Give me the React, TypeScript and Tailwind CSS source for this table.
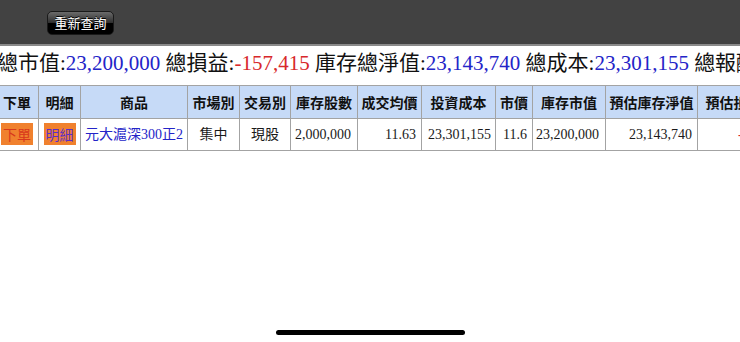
import React from 'react';

const summary = [
    { label: '總市值', value: '23,200,000', tone: 'text-[#2424c8]' },
    { label: '總損益', value: '-157,415', tone: 'text-[#d8282a]' },
    { label: '庫存總淨值', value: '23,143,740', tone: 'text-[#2424c8]' },
    { label: '總成本', value: '23,301,155', tone: 'text-[#2424c8]' },
    { label: '總報酬率', value: '-0.68%', tone: 'text-[#d8282a]' },
];

const headers = [
    { text: '下單', w: 'w-[43px]' },
    { text: '明細', w: 'w-[42px]' },
    { text: '商品', w: 'w-[107px]' },
    { text: '市場別', w: 'w-[52px]' },
    { text: '交易別', w: 'w-[51px]' },
    { text: '庫存股數', w: 'w-[67px]' },
    { text: '成交均價', w: 'w-[64px]' },
    { text: '投資成本', w: 'w-[74px]' },
    { text: '市價', w: 'w-[37px]' },
    { text: '庫存市值', w: 'w-[73px]' },
    { text: '預估庫存淨值', w: 'w-[92px]' },
    { text: '預估損益', w: 'w-[72px]' },
];

const serif = "font-['Liberation_Serif','Noto_Sans_CJK_TC',serif]";
const sans = "font-['Noto_Sans_CJK_TC','Noto_Sans',sans-serif]";

const App: React.FC = () => {
    return (
        <div className="relative h-[342px] w-[740px] overflow-hidden bg-white">
            {/* top toolbar */}
            <div className="flex h-[46px] items-start border-b-2 border-[#8a8a8a] bg-[#424242] pl-[47px] pt-[11px]">
                <button
                    className={`h-[24px] w-[67px] rounded-[5px] border border-[#1a1a1a] bg-[linear-gradient(#6a6a6a,#2e2e2e_50%,#000_52%,#000)] text-[13px] leading-[22px] text-white [text-shadow:0_-1px_0_#000] ${sans}`}
                >
                    重新查詢
                </button>
            </div>

            {/* totals line (page scrolled a little to the right) */}
            <div className={`-ml-[3px] h-[39px] whitespace-nowrap text-[21px] leading-[30px] text-[#111] ${serif}`}>
                {summary.map((s, i) => (
                    <React.Fragment key={i}>
                        {i > 0 && ' '}
                        <span className={sans}>{s.label}</span>:<span className={s.tone}>{s.value}</span>
                    </React.Fragment>
                ))}
            </div>

            {/* holdings table */}
            <table className="-ml-[5px] w-[774px] table-fixed border-collapse border-t border-[#777]">
                <thead>
                    <tr className="h-[33px] bg-[#c6daf7]">
                        {headers.map(h => (
                            <th
                                key={h.text}
                                className={`${h.w} whitespace-nowrap border border-[#a3a3a3] p-0 text-center text-[14px] font-bold text-[#111] ${sans}`}
                            >
                                {h.text}
                            </th>
                        ))}
                    </tr>
                </thead>
                <tbody>
                    <tr className={`h-[32px] whitespace-nowrap text-[14px] text-[#1a1a1a] ${serif}`}>
                        <td className="border border-[#a3a3a3] p-0 text-center">
                            <span className={`inline-block h-[22px] w-[32px] bg-[#f0812e] text-center leading-[22px] text-[#d8381c] ${sans}`}>下單</span>
                        </td>
                        <td className="border border-[#a3a3a3] p-0 text-center">
                            <span className={`inline-block h-[22px] w-[32px] bg-[#f0812e] text-center leading-[22px] text-[#5a2dc8] ${sans}`}>明細</span>
                        </td>
                        <td className="border border-[#a3a3a3] p-0 text-center text-[#2424c8]">元大滬深300正2</td>
                        <td className="border border-[#a3a3a3] p-0 text-center">集中</td>
                        <td className="border border-[#a3a3a3] p-0 text-center">現股</td>
                        <td className="border border-[#a3a3a3] pr-[6px] text-right">2,000,000</td>
                        <td className="border border-[#a3a3a3] pr-[5px] text-right">11.63</td>
                        <td className="border border-[#a3a3a3] pr-[4px] text-right">23,301,155</td>
                        <td className="border border-[#a3a3a3] pr-[5px] text-right">11.6</td>
                        <td className="border border-[#a3a3a3] pr-[6px] text-right">23,200,000</td>
                        <td className="border border-[#a3a3a3] pr-[5px] text-right">23,143,740</td>
                        <td className="overflow-hidden border border-[#a3a3a3] pl-[40px] text-left text-[#d8282a]">-157,415</td>
                    </tr>
                </tbody>
            </table>

            {/* home indicator */}
            <div className="absolute left-[276px] top-[330px] h-[5px] w-[189px] rounded-full bg-black" />
        </div>
    );
};

export default App;
